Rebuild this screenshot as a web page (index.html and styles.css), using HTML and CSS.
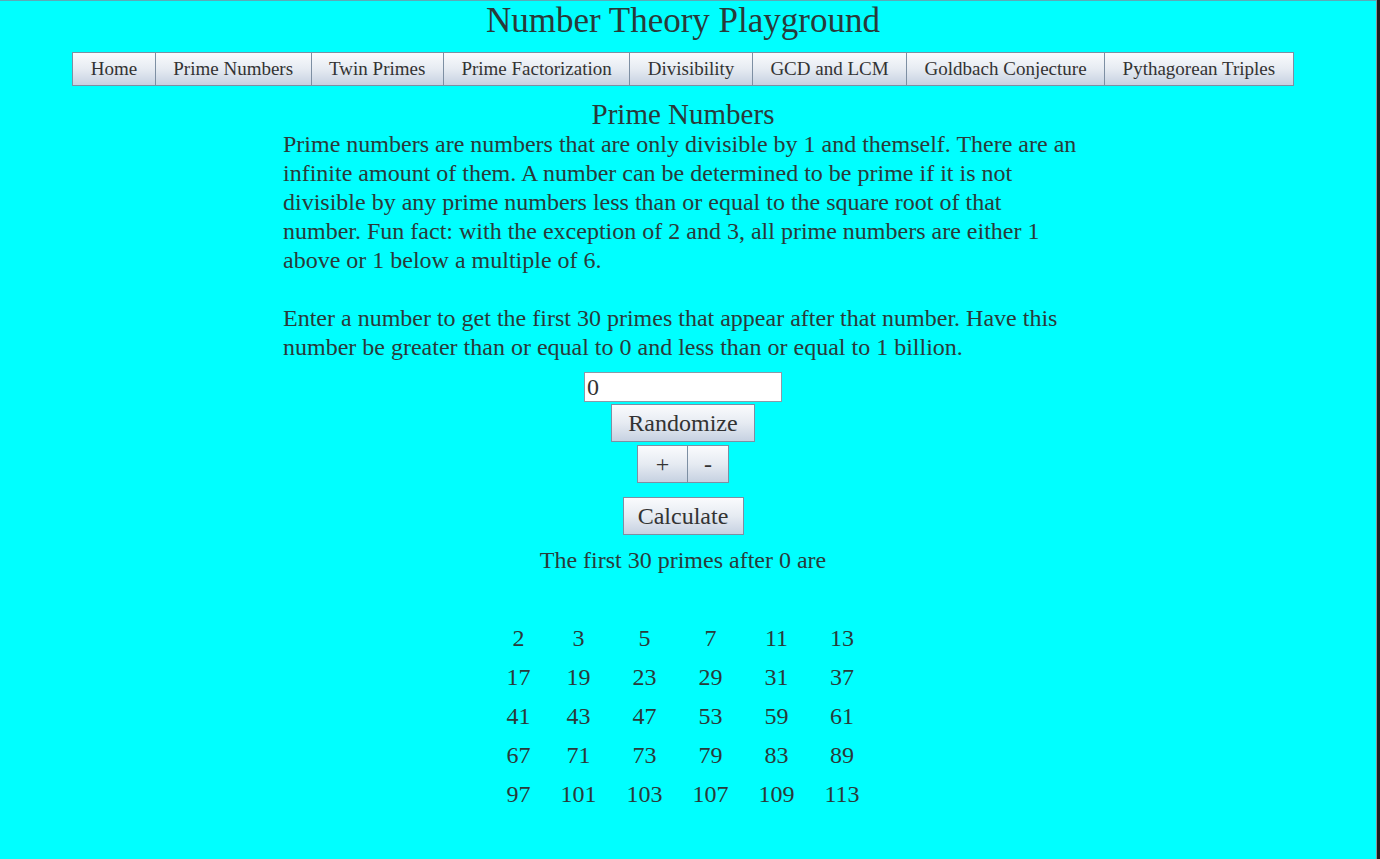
FILE: index.html
```html
<!DOCTYPE html>
<html>
<head>
<meta charset="utf-8">
<title>Number Theory Playground</title>
<link rel="stylesheet" href="styles.css">
</head>
<body>
<div class="page">
  <h1 class="title">Number Theory Playground</h1>
  <nav class="nav">
    <button class="nav-btn">Home</button>
    <button class="nav-btn">Prime Numbers</button>
    <button class="nav-btn">Twin Primes</button>
    <button class="nav-btn">Prime Factorization</button>
    <button class="nav-btn">Divisibility</button>
    <button class="nav-btn">GCD and LCM</button>
    <button class="nav-btn">Goldbach Conjecture</button>
    <button class="nav-btn">Pythagorean Triples</button>
  </nav>
  <h2 class="section-title">Prime Numbers</h2>
  <div class="desc">
    <p>Prime numbers are numbers that are only divisible by 1 and themself. There are an infinite amount of them. A number can be determined to be prime if it is not divisible by any prime numbers less than or equal to the square root of that number. Fun fact: with the exception of 2 and 3, all prime numbers are either 1 above or 1 below a multiple of 6.</p>
    <p>Enter a number to get the first 30 primes that appear after that number. Have this number be greater than or equal to 0 and less than or equal to 1 billion.</p>
  </div>
  <div class="controls">
    <input class="num-input" type="text" value="0">
    <button class="btn btn-random">Randomize</button>
    <div class="pm">
      <button class="btn btn-plus">+</button><button class="btn btn-minus">-</button>
    </div>
    <button class="btn btn-calc">Calculate</button>
  </div>
  <p class="result">The first 30 primes after 0 are</p>
  <table class="primes">
    <tr><td>2</td><td>3</td><td>5</td><td>7</td><td>11</td><td>13</td></tr>
    <tr><td>17</td><td>19</td><td>23</td><td>29</td><td>31</td><td>37</td></tr>
    <tr><td>41</td><td>43</td><td>47</td><td>53</td><td>59</td><td>61</td></tr>
    <tr><td>67</td><td>71</td><td>73</td><td>79</td><td>83</td><td>89</td></tr>
    <tr><td>97</td><td>101</td><td>103</td><td>107</td><td>109</td><td>113</td></tr>
  </table>
</div>
</body>
</html>
```

FILE: styles.css
```css
html {
  background: #1e1e1e;
  margin: 0;
  padding: 0;
}
body {
  margin: 0;
  width: 1376px;
  min-height: 858px;
  background: #00ffff;
  border-top: 1px solid #5aaab8;
  border-right: 1px solid #8a9a9a;
  font-family: "Liberation Serif", "Times New Roman", serif;
  color: #333;
}
.page {
  width: 1366px;
  display: flex;
  flex-direction: column;
  align-items: center;
}
.title {
  margin: 0;
  font-size: 35px;
  font-weight: normal;
  line-height: 40px;
  color: #2a3a3a;
}
.nav {
  margin-top: 11px;
  display: flex;
}
.nav-btn {
  font-family: inherit;
  font-size: 19px;
  color: #333;
  height: 34px;
  padding: 0 17.5px;
  background: linear-gradient(to bottom, #fafbfd 0%, #e6ebf2 50%, #c6d1e1 100%);
  border: 1px solid #7d8fa3;
  margin: 0;
  margin-left: -1px;
}
.nav-btn:first-child { margin-left: 0; }
.section-title {
  margin: 12px 0 0;
  font-size: 29px;
  font-weight: normal;
  line-height: 32px;
  color: #2a3a3a;
}
.desc {
  width: 800px;
  font-size: 24px;
  line-height: 29px;
  color: #2a3a3a;
}
.desc p { margin: 0 0 29px; }
.desc p:last-child { margin-bottom: 0; }
.controls {
  margin-top: 10px;
  display: flex;
  flex-direction: column;
  align-items: center;
}
.num-input {
  width: 198px;
  height: 30px;
  box-sizing: border-box;
  border: 1px solid #8a9aa8;
  background: #fff;
  font-family: inherit;
  font-size: 24px;
  color: #333;
  padding: 0 2px;
  margin: 0;
}
.btn {
  font-family: inherit;
  font-size: 24px;
  color: #333;
  height: 38px;
  box-sizing: border-box;
  background: linear-gradient(to bottom, #fafbfd 0%, #e6ebf2 50%, #c6d1e1 100%);
  border: 1px solid #7d8fa3;
  margin: 0;
  padding: 0;
}
.btn-random { width: 144px; margin-top: 2px; }
.pm { display: flex; margin-top: 3px; }
.btn-plus { width: 51px; }
.btn-minus { width: 42px; margin-left: -1px; }
.btn-calc { width: 121px; margin-top: 14px; }
.result {
  margin: 11px 0 0;
  font-size: 24px;
  line-height: 29px;
  color: #2a3a3a;
}
.primes {
  margin-top: 44px;
  border-collapse: collapse;
  font-size: 24px;
  color: #2a3a3a;
}
.primes td {
  height: 39px;
  padding: 0 15px;
  text-align: center;
  box-sizing: border-box;
}
```
